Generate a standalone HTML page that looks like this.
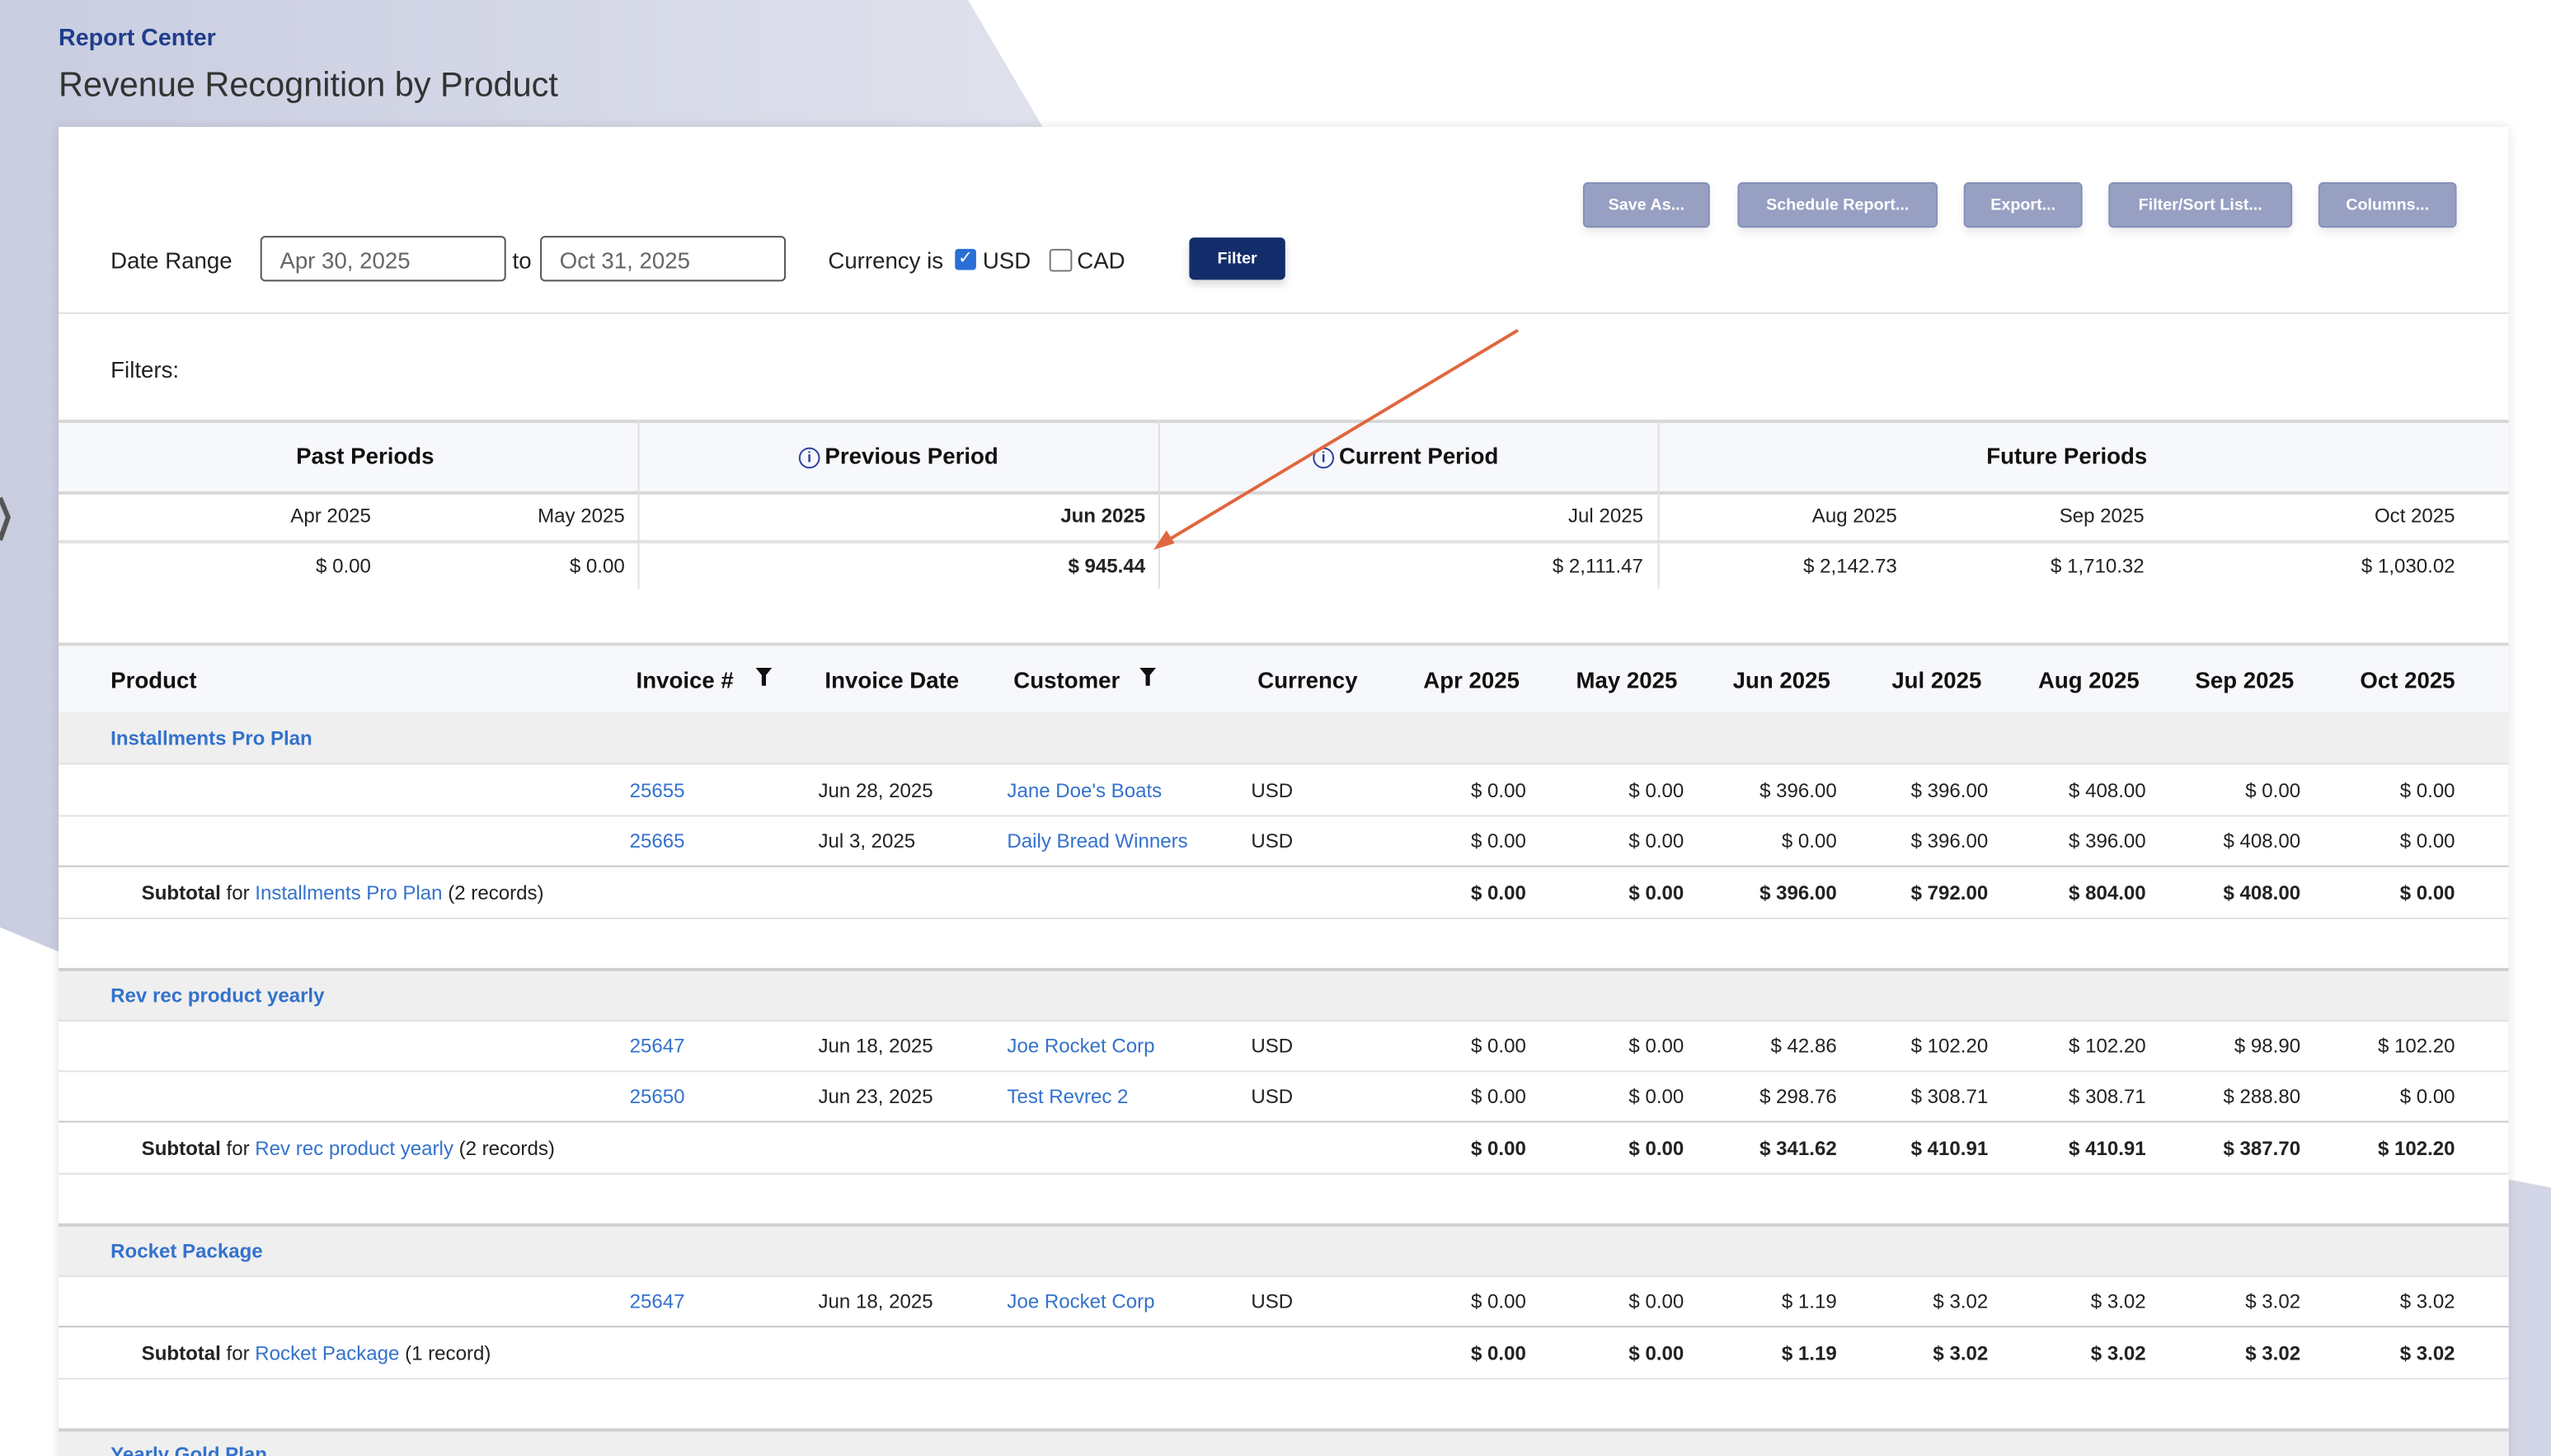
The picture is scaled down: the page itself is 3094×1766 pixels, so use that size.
<!DOCTYPE html>
<html><head><meta charset="utf-8"><style>
html,body{margin:0;padding:0;width:3094px;height:1766px;overflow:hidden;background:#fff}
#w{position:absolute;left:0;top:0;width:1568px;height:895px;transform:scale(1.97321,1.97318);transform-origin:0 0;font-family:"Liberation Sans",sans-serif;color:#222;overflow:hidden}
.a{position:absolute;white-space:nowrap;line-height:16px;font-size:12.2px}
.b{font-weight:bold}
.l{color:#3472cc}
.h{font-size:14px;font-weight:bold;color:#111}
.row{position:absolute;left:36px;width:1506px;border-top:1px solid #e2e2e2}
.btn{position:absolute;top:112px;height:26px;background:#97a0c2;border:1px solid #8690b8;border-radius:3px;color:#fff;font-size:10px;font-weight:bold;text-align:center;line-height:27px;box-shadow:0 3px 5px rgba(0,0,0,.08)}
.inp{position:absolute;top:145px;height:28px;border:1px solid #555;border-radius:3px;color:#666;font-size:14px;line-height:28px;padding-left:11px;box-sizing:border-box}
.vl{position:absolute;width:1px;background:#e0e0e0}
</style></head><body><div id="w">
<svg style="position:absolute;left:0;top:0" width="1568" height="895">
<defs><linearGradient id="g" x1="0" y1="0" x2="1" y2="0"><stop offset="0" stop-color="#c9cde0"/><stop offset="1" stop-color="#dfe1ec"/></linearGradient>
<linearGradient id="g2" x1="0" y1="0" x2="1" y2="0"><stop offset="0" stop-color="#d6d9e7"/><stop offset="1" stop-color="#e4e6ef"/></linearGradient></defs>
<polygon points="0,0 595,0 642,80 36,80 36,585 0,570" fill="url(#g)"/>
<polygon points="1542,725 1568,730 1568,895 1542,895" fill="#d3d6e6"/>
<path d="M0,306 L5,318 L0,332" stroke="#555" stroke-width="3" fill="none"/>
</svg>
<div class="a b" style="left:36px;top:16px;color:#1f3d8c;font-size:14.5px">Report Center</div>
<div class="a" style="left:36px;top:41px;font-size:21px;line-height:24px;color:#333">Revenue Recognition by Product</div>
<div style="position:absolute;left:36px;top:78px;width:1506px;height:830px;background:#fff;box-shadow:0 0 6px rgba(0,0,0,.12)"></div>

<div class="btn" style="left:973px;width:76px">Save As...</div>
<div class="btn" style="left:1068px;width:121px">Schedule Report...</div>
<div class="btn" style="left:1207px;width:71px">Export...</div>
<div class="btn" style="left:1296px;width:111px">Filter/Sort List...</div>
<div class="btn" style="left:1425px;width:83px">Columns...</div>

<div class="a" style="left:68px;top:152px;font-size:14px">Date Range</div>
<div class="inp" style="left:160px;width:151px">Apr 30, 2025</div>
<div class="a" style="left:315px;top:152px;font-size:14px">to</div>
<div class="inp" style="left:332px;width:151px">Oct 31, 2025</div>
<div class="a" style="left:509px;top:152px;font-size:14px">Currency is</div>
<div style="position:absolute;left:587px;top:153px;width:13px;height:13px;background:#2a6fd6;border-radius:2px;color:#fff;font-size:11px;line-height:13px;text-align:center">✓</div>
<div class="a" style="left:604px;top:152px;font-size:14px">USD</div>
<div style="position:absolute;left:645px;top:153px;width:12px;height:12px;border:1px solid #777;border-radius:2px"></div>
<div class="a" style="left:662px;top:152px;font-size:14px">CAD</div>
<div style="position:absolute;left:731px;top:146px;width:59px;height:26px;background:#132d6b;border-radius:3px;color:#fff;font-size:10px;font-weight:bold;text-align:center;line-height:28px;box-shadow:0 3px 5px rgba(0,0,0,.15)">Filter</div>

<div class="row" style="top:192px;border-top:1px solid #e0e0e0"></div>
<div class="a" style="left:68px;top:219px;font-size:14px">Filters:</div>

<div class="row" style="top:258px;height:42px;background:#f7f8fb;border-top:2px solid #d8d8d8;border-bottom:2px solid #d8d8d8"></div>
<div class="row" style="top:332px;border-top:2px solid #e2e2e2"></div>
<div class="vl" style="left:392px;top:259px;height:103px"></div>
<div class="vl" style="left:712px;top:259px;height:103px"></div>
<div class="vl" style="left:1019px;top:259px;height:103px"></div>
<div class="a h" style="left:182px;top:272px">Past Periods</div>
<div class="a h" style="left:491px;top:272px"><span style="display:inline-block;width:11px;height:11px;border:1.3px solid #2b3f9e;border-radius:50%;color:#2b3f9e;font-size:9px;line-height:11px;text-align:center;vertical-align:1px;margin-right:3px">i</span>Previous Period</div>
<div class="a h" style="left:807px;top:272px"><span style="display:inline-block;width:11px;height:11px;border:1.3px solid #2b3f9e;border-radius:50%;color:#2b3f9e;font-size:9px;line-height:11px;text-align:center;vertical-align:1px;margin-right:3px">i</span>Current Period</div>
<div class="a h" style="left:1221px;top:272px">Future Periods</div>
<div class="a" style="right:1340px;top:309px">Apr 2025</div>
<div class="a" style="right:1184px;top:309px">May 2025</div>
<div class="a b" style="right:864px;top:309px">Jun 2025</div>
<div class="a" style="right:558px;top:309px">Jul 2025</div>
<div class="a" style="right:402px;top:309px">Aug 2025</div>
<div class="a" style="right:250px;top:309px">Sep 2025</div>
<div class="a" style="right:59px;top:309px">Oct 2025</div>
<div class="a" style="right:1340px;top:340px">$ 0.00</div>
<div class="a" style="right:1184px;top:340px">$ 0.00</div>
<div class="a b" style="right:864px;top:340px">$ 945.44</div>
<div class="a" style="right:558px;top:340px">$ 2,111.47</div>
<div class="a" style="right:402px;top:340px">$ 2,142.73</div>
<div class="a" style="right:250px;top:340px">$ 1,710.32</div>
<div class="a" style="right:59px;top:340px">$ 1,030.02</div>

<div class="row" style="top:395px;height:41px;background:#f7f8fb;border-top:2px solid #d8d8d8;border-bottom:2px solid #d0d0d0"></div>
<div class="a h" style="left:68px;top:410px">Product</div>
<div class="a h" style="left:391px;top:410px">Invoice #</div>
<svg style="position:absolute;left:464px;top:410px" width="11" height="12"><path d="M0.5,0.5 H10.5 L6.8,5 V11.5 H4.2 V5 Z" fill="#111"/></svg>
<div class="a h" style="left:507px;top:410px">Invoice Date</div>
<div class="a h" style="left:623px;top:410px">Customer</div>
<svg style="position:absolute;left:700px;top:410px" width="11" height="12"><path d="M0.5,0.5 H10.5 L6.8,5 V11.5 H4.2 V5 Z" fill="#111"/></svg>
<div class="a h" style="left:773px;top:410px">Currency</div>
<div class="a h" style="right:634px;top:410px">Apr 2025</div>
<div class="a h" style="right:537px;top:410px">May 2025</div>
<div class="a h" style="right:443px;top:410px">Jun 2025</div>
<div class="a h" style="right:350px;top:410px">Jul 2025</div>
<div class="a h" style="right:253px;top:410px">Aug 2025</div>
<div class="a h" style="right:158px;top:410px">Sep 2025</div>
<div class="a h" style="right:59px;top:410px">Oct 2025</div>

<div class="row" style="top:438px;height:31px;background:#efefef;border-top:none"></div>
<div class="row" style="top:469px"></div><div class="row" style="top:501px"></div>
<div class="row" style="top:532px;border-top:1.5px solid #c8c8c8"></div><div class="row" style="top:564px"></div>
<div class="row" style="top:595px;height:31px;background:#efefef;border-top:2px solid #d0d0d0"></div>
<div class="row" style="top:627px"></div><div class="row" style="top:658px"></div>
<div class="row" style="top:689px;border-top:1.5px solid #c8c8c8"></div><div class="row" style="top:721px"></div>
<div class="row" style="top:752px;height:31px;background:#efefef;border-top:2px solid #d0d0d0"></div>
<div class="row" style="top:784px"></div>
<div class="row" style="top:815px;border-top:1.5px solid #c8c8c8"></div><div class="row" style="top:847px"></div>
<div class="row" style="top:878px;height:31px;background:#efefef;border-top:2px solid #d0d0d0"></div>

<div class="a b l" style="left:68px;top:446px">Installments Pro Plan</div>
<div class="a l" style="left:387px;top:478px">25655</div><div class="a" style="left:503px;top:478px">Jun 28, 2025</div><div class="a l" style="left:619px;top:478px">Jane Doe's Boats</div><div class="a" style="left:769px;top:478px">USD</div>
<div class="a" style="right:630px;top:478px">$ 0.00</div><div class="a" style="right:533px;top:478px">$ 0.00</div><div class="a" style="right:439px;top:478px">$ 396.00</div><div class="a" style="right:346px;top:478px">$ 396.00</div><div class="a" style="right:249px;top:478px">$ 408.00</div><div class="a" style="right:154px;top:478px">$ 0.00</div><div class="a" style="right:59px;top:478px">$ 0.00</div>
<div class="a l" style="left:387px;top:509px">25665</div><div class="a" style="left:503px;top:509px">Jul 3, 2025</div><div class="a l" style="left:619px;top:509px">Daily Bread Winners</div><div class="a" style="left:769px;top:509px">USD</div>
<div class="a" style="right:630px;top:509px">$ 0.00</div><div class="a" style="right:533px;top:509px">$ 0.00</div><div class="a" style="right:439px;top:509px">$ 0.00</div><div class="a" style="right:346px;top:509px">$ 396.00</div><div class="a" style="right:249px;top:509px">$ 396.00</div><div class="a" style="right:154px;top:509px">$ 408.00</div><div class="a" style="right:59px;top:509px">$ 0.00</div>
<div class="a" style="left:87px;top:541px"><b>Subtotal</b> for <span class="l">Installments Pro Plan</span> (2 records)</div>
<div class="a b" style="right:630px;top:541px">$ 0.00</div><div class="a b" style="right:533px;top:541px">$ 0.00</div><div class="a b" style="right:439px;top:541px">$ 396.00</div><div class="a b" style="right:346px;top:541px">$ 792.00</div><div class="a b" style="right:249px;top:541px">$ 804.00</div><div class="a b" style="right:154px;top:541px">$ 408.00</div><div class="a b" style="right:59px;top:541px">$ 0.00</div>

<div class="a b l" style="left:68px;top:604px">Rev rec product yearly</div>
<div class="a l" style="left:387px;top:635px">25647</div><div class="a" style="left:503px;top:635px">Jun 18, 2025</div><div class="a l" style="left:619px;top:635px">Joe Rocket Corp</div><div class="a" style="left:769px;top:635px">USD</div>
<div class="a" style="right:630px;top:635px">$ 0.00</div><div class="a" style="right:533px;top:635px">$ 0.00</div><div class="a" style="right:439px;top:635px">$ 42.86</div><div class="a" style="right:346px;top:635px">$ 102.20</div><div class="a" style="right:249px;top:635px">$ 102.20</div><div class="a" style="right:154px;top:635px">$ 98.90</div><div class="a" style="right:59px;top:635px">$ 102.20</div>
<div class="a l" style="left:387px;top:666px">25650</div><div class="a" style="left:503px;top:666px">Jun 23, 2025</div><div class="a l" style="left:619px;top:666px">Test Revrec 2</div><div class="a" style="left:769px;top:666px">USD</div>
<div class="a" style="right:630px;top:666px">$ 0.00</div><div class="a" style="right:533px;top:666px">$ 0.00</div><div class="a" style="right:439px;top:666px">$ 298.76</div><div class="a" style="right:346px;top:666px">$ 308.71</div><div class="a" style="right:249px;top:666px">$ 308.71</div><div class="a" style="right:154px;top:666px">$ 288.80</div><div class="a" style="right:59px;top:666px">$ 0.00</div>
<div class="a" style="left:87px;top:698px"><b>Subtotal</b> for <span class="l">Rev rec product yearly</span> (2 records)</div>
<div class="a b" style="right:630px;top:698px">$ 0.00</div><div class="a b" style="right:533px;top:698px">$ 0.00</div><div class="a b" style="right:439px;top:698px">$ 341.62</div><div class="a b" style="right:346px;top:698px">$ 410.91</div><div class="a b" style="right:249px;top:698px">$ 410.91</div><div class="a b" style="right:154px;top:698px">$ 387.70</div><div class="a b" style="right:59px;top:698px">$ 102.20</div>

<div class="a b l" style="left:68px;top:761px">Rocket Package</div>
<div class="a l" style="left:387px;top:792px">25647</div><div class="a" style="left:503px;top:792px">Jun 18, 2025</div><div class="a l" style="left:619px;top:792px">Joe Rocket Corp</div><div class="a" style="left:769px;top:792px">USD</div>
<div class="a" style="right:630px;top:792px">$ 0.00</div><div class="a" style="right:533px;top:792px">$ 0.00</div><div class="a" style="right:439px;top:792px">$ 1.19</div><div class="a" style="right:346px;top:792px">$ 3.02</div><div class="a" style="right:249px;top:792px">$ 3.02</div><div class="a" style="right:154px;top:792px">$ 3.02</div><div class="a" style="right:59px;top:792px">$ 3.02</div>
<div class="a" style="left:87px;top:824px"><b>Subtotal</b> for <span class="l">Rocket Package</span> (1 record)</div>
<div class="a b" style="right:630px;top:824px">$ 0.00</div><div class="a b" style="right:533px;top:824px">$ 0.00</div><div class="a b" style="right:439px;top:824px">$ 1.19</div><div class="a b" style="right:346px;top:824px">$ 3.02</div><div class="a b" style="right:249px;top:824px">$ 3.02</div><div class="a b" style="right:154px;top:824px">$ 3.02</div><div class="a b" style="right:59px;top:824px">$ 3.02</div>
<div class="a b l" style="left:68px;top:886px">Yearly Gold Plan</div>

<svg style="position:absolute;left:0;top:0" width="1568" height="895">
<line x1="933" y1="203" x2="718" y2="332" stroke="#e0673f" stroke-width="2"/>
<polygon points="709,338 717,326 722,334" fill="#e0673f"/>
</svg>
</div></body></html>
